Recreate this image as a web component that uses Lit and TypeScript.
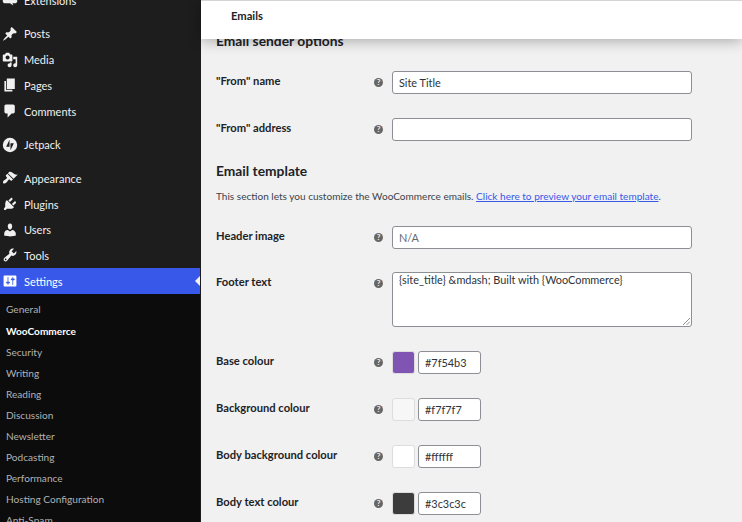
import { LitElement, html, css, svg } from "lit";
import { customElement } from "lit/decorators.js";

const icons: Record<string, string> = {
  ext: "M3 3h14c1 0 2 1 2 2v7c0 1-1 2-2 2h-4l1 3-4-3H3c-1 0-2-1-2-2V5c0-1 1-2 2-2z",
  posts: "M10.44 3.02l1.82-1.82 6.36 6.35-1.83 1.82c-1.05-.68-2.48-.57-3.41.36l-.75.75c-.92.93-1.04 2.35-.35 3.41l-1.83 1.82-2.41-2.41-2.8 2.79c-.42.42-3.38 2.71-3.8 2.29s1.86-3.39 2.28-3.81l2.79-2.79L4.1 9.36l1.83-1.82c1.05.69 2.48.57 3.4-.36l.75-.75c.93-.92 1.05-2.35.36-3.41z",
  media: "M13 11V4c0-.55-.45-1-1-1h-1.67L9 1H5L3.67 3H2c-.55 0-1 .45-1 1v7c0 .55.45 1 1 1h10c.55 0 1-.45 1-1zM7 4.5c1.38 0 2.5 1.12 2.5 2.5S8.38 9.5 7 9.5 4.5 8.38 4.5 7 5.62 4.5 7 4.5zM14 6h5v10.5c0 1.38-1.12 2.5-2.5 2.5S14 17.88 14 16.5s1.12-2.5 2.5-2.5c.17 0 .34.02.5.05V9h-3V6zm-4 8.05V13h2v3.5c0 1.38-1.12 2.5-2.5 2.5S7 17.88 7 16.5 8.12 14 9.5 14c.17 0 .34.02.5.05z",
  pages: "M6 15V2h10v13H6zm-1 1h8v2H3V5h2v11z",
  comments: "M5 2h9c1.1 0 2 .9 2 2v7c0 1.1-.9 2-2 2h-2l-5 5v-5H5c-1.1 0-2-.9-2-2V4c0-1.1.9-2 2-2z",
  jetpack: "M10 1a9 9 0 1 0 0 18 9 9 0 0 0 0-18zM9.4 3.5v8.6H5.2zM10.6 16.5V7.9h4.2z",
  appearance: "M14.48 11.06L7.41 3.99l1.5-1.5c.5-.56 2.3-.47 3.51.32 1.21.8 1.43 1.28 2.91 2.1 1.18.64 2.45 1.26 4.45.85zm-.71.71L6.7 4.7 4.93 6.47c-.39.39-.39 1.02 0 1.41l1.06 1.06c.39.39.39 1.03 0 1.42-.6.6-1.43 1.11-2.21 1.69-.35.26-.7.53-1.01.84C1.43 13.71.96 15.26 1.5 16.7c1.44.54 3 .07 4.3-1.27.31-.31.58-.66.84-1.01.58-.78 1.09-1.61 1.69-2.21.39-.39 1.03-.39 1.42 0l1.06 1.06c.39.39 1.02.39 1.41 0z",
  plugins: "M13.11 4.36L9.87 7.6 8 5.73l3.24-3.24c.35-.34 1.05-.2 1.56.32.52.51.66 1.21.31 1.55zm-8 1.77l.91-1.12 9.01 9.01-1.19.84c-.71.71-2.63 1.16-3.82 1.16H6.14L4.9 17.26c-.59.59-1.54.59-2.12 0-.59-.58-.59-1.53 0-2.12l1.24-1.24v-3.88c0-1.13.4-3.19 1.09-3.89zm7.26 3.97l3.24-3.24c.34-.35 1.04-.21 1.55.31.52.51.66 1.21.31 1.55l-3.24 3.25z",
  users: "M10 9.25c-2.27 0-2.73-3.44-2.73-3.44C7 4.02 7.82 2 9.97 2c2.16 0 2.98 2.02 2.71 3.81 0 0-.41 3.44-2.68 3.44zm0 2.57L12.72 10c2.39 0 4.52 2.33 4.52 4.53v2.49s-3.65 1.13-7.24 1.13c-3.65 0-7.24-1.13-7.24-1.13v-2.49c0-2.25 1.94-4.48 4.47-4.48z",
  tools: "M16.68 9.77c-1.34 1.34-3.3 1.67-4.95.99l-5.41 6.52c-.99.99-2.59.99-3.58 0s-.99-2.59 0-3.57l6.52-5.42c-.68-1.65-.35-3.61.99-4.95 1.28-1.28 3.12-1.62 4.72-1.06l-2.89 2.89 2.82 2.82 2.86-2.87c.53 1.58.18 3.39-1.08 4.65zM3.81 16.21c.4.39 1.04.39 1.43 0 .4-.4.4-1.04 0-1.43-.39-.4-1.03-.4-1.43 0-.39.39-.39 1.03 0 1.43z",
  settings: "M18 16V4c0-.55-.45-1-1-1H3c-.55 0-1 .45-1 1v12c0 .55.45 1 1 1h14c.55 0 1-.45 1-1zM8 11h1c.55 0 1 .45 1 1s-.45 1-1 1H8v1.5c0 .28-.22.5-.5.5s-.5-.22-.5-.5V13H6c-.55 0-1-.45-1-1s.45-1 1-1h1V5.5c0-.28.22-.5.5-.5s.5.22.5.5V11zm5-2h-1c-.55 0-1-.45-1-1s.45-1 1-1h1V5.5c0-.28.22-.5.5-.5s.5.22.5.5V7h1c.55 0 1 .45 1 1s-.45 1-1 1h-1v5.5c0 .28-.22.5-.5.5s-.5-.22-.5-.5V9z",
};

const icon = (n: string) =>
  html`<svg class="ico" viewBox="0 0 20 20" fill="currentColor" fill-rule="evenodd">${svg`<path d=${icons[n]}></path>`}</svg>`;

const groups: [string, string][][] = [
  [["ext", "Extensions"]],
  [["posts", "Posts"], ["media", "Media"], ["pages", "Pages"], ["comments", "Comments"]],
  [["jetpack", "Jetpack"]],
  [["appearance", "Appearance"], ["plugins", "Plugins"], ["users", "Users"], ["tools", "Tools"]],
];

const sub = ["General", "WooCommerce", "Security", "Writing", "Reading", "Discussion", "Newsletter", "Podcasting", "Performance", "Hosting Configuration", "Anti-Spam"];

const colours = [
  ["Base colour", "#7f54b3"],
  ["Background colour", "#f7f7f7"],
  ["Body background colour", "#ffffff"],
  ["Body text colour", "#3c3c3c"],
];

@customElement("app-root")
export class AppRoot extends LitElement {
  static styles = css`
    :host {
      display: flex;
      width: 742px;
      height: 522px;
      overflow: hidden;
      background: #f1f1f1;
      font-family: "Lato", sans-serif;
      color: #3c434a;
    }
    .side {
      width: 200px;
      flex: none;
      background: #1d1d1d;
      border-right: 1px solid #1d1d1d;
      overflow: hidden;
      height: 522px;
    }
    .menu { margin-top: -12.6px; }
    .group { margin-bottom: 8px; }
    .item {
      display: flex;
      align-items: center;
      height: 25.7px;
      padding-left: 2px;
      gap: 6px;
      color: #f0f0f0;
      font-size: 11px;
    }
    .ico { width: 16px; height: 16px; flex: none; }
    .item.active {
      background: #3858e9;
      color: #fff;
      position: relative;
      margin-right: -1px;
    }
    .item.active::after {
      content: "";
      position: absolute;
      right: 0;
      top: 50%;
      margin-top: -6px;
      border: 6px solid transparent;
      border-right-color: #f1f1f1;
      border-left-width: 0;
    }
    .sub {
      background: #0c0c0c;
      padding: 5.5px 0 0 6px;
      height: 240px;
    }
    .sub div {
      height: 21.1px;
      line-height: 21.1px;
      font-size: 10.1px;
      color: #b0b2b4;
      white-space: nowrap;
    }
    .sub div.cur { color: #fff; font-weight: 700; }
    .main { flex: 1; min-width: 0; position: relative; }
    .top {
      position: relative;
      z-index: 2;
      box-sizing: border-box;
      height: 39px;
      background: #fff;
      border-top: 1px solid #d4d4d4;
      box-shadow: 0 2px 14px rgba(0, 0, 0, 0.3);
      padding: 7px 0 0 30px;
      font-size: 11.2px;
      line-height: 15px;
      font-weight: 700;
      color: #1d2327;
    }
    .content {
      margin-top: -7px;
      padding-left: 15px;
      width: 476px;
    }
    h2 {
      margin: 0;
      font-size: 13.8px;
      line-height: 18px;
      font-weight: 700;
      color: #1d2327;
    }
    .row {
      display: flex;
      align-items: flex-start;
      margin-bottom: 24px;
    }
    .row.first { margin-top: 21px; }
    .label {
      width: 156px;
      flex: none;
      font-size: 11.2px;
      font-weight: 700;
      line-height: 18px;
      padding-top: 1px;
      color: #1d2327;
    }
    .help {
      width: 9px;
      height: 9px;
      border-radius: 50%;
      background: #666;
      color: #f1f1f1;
      font-size: 8px;
      font-weight: 700;
      line-height: 9px;
      text-align: center;
      margin: 7px 0 0 2px;
      flex: none;
    }
    .fields { margin-left: 9px; display: flex; gap: 3px; }
    .input {
      box-sizing: border-box;
      width: 300px;
      height: 23px;
      background: #fff;
      border: 1px solid #8c8f94;
      border-radius: 3px;
      font-size: 10.9px;
      line-height: 21px;
      padding-left: 6px;
      color: #2c3338;
    }
    .input.ph { color: #646970; }
    .area {
      height: 55px;
      line-height: 13px;
      position: relative;
    }
    .grip {
      position: absolute;
      right: 1px;
      bottom: 1px;
      width: 8px;
      height: 8px;
    }
    .swatch {
      box-sizing: border-box;
      width: 23px;
      height: 23px;
      border: 1px solid #ddd;
      border-radius: 3px;
    }
    .hex { width: 63px; }
    .desc {
      margin: 9px 0 22px;
      font-size: 10.05px;
      line-height: 15px;
      color: #3c434a;
      white-space: nowrap;
    }
    .desc a { color: #3858e9; text-decoration: underline; }
    .tpl { margin-top: -3px; }
  `;

  private field(label: string, body: unknown) {
    return html`<div class="row">
      <div class="label">${label}</div>
      <div class="help">?</div>
      <div class="fields">${body}</div>
    </div>`;
  }

  render() {
    return html`
      <nav class="side">
        <div class="menu">
          ${groups.map(
            (g) => html`<div class="group">
              ${g.map(([i, t]) => html`<div class="item">${icon(i)}<span>${t}</span></div>`)}
            </div>`
          )}
          <div class="item active" style="margin-top:-8px">${icon("settings")}<span>Settings</span></div>
          <div class="sub">
            ${sub.map((s) => html`<div class=${s === "WooCommerce" ? "cur" : ""}>${s}</div>`)}
          </div>
        </div>
      </nav>
      <main class="main">
        <header class="top">Emails</header>
        <div class="content">
          <h2>Email sender options</h2>
          <div class="row first">
            <div class="label">"From" name</div>
            <div class="help">?</div>
            <div class="fields"><div class="input">Site Title</div></div>
          </div>
          ${this.field('"From" address', html`<div class="input"></div>`)}
          <h2 class="tpl">Email template</h2>
          <p class="desc">This section lets you customize the WooCommerce emails. <a>Click here to preview your email template</a>.</p>
          <div class="row" style="margin-bottom:23px">
            <div class="label">Header image</div>
            <div class="help">?</div>
            <div class="fields"><div class="input ph">N/A</div></div>
          </div>
          ${this.field(
            "Footer text",
            html`<div class="input area">{site_title} &amp;mdash; Built with {WooCommerce}
              <svg class="grip" viewBox="0 0 8 8" fill="none" stroke="#777" stroke-width="0.8"><path d="M1 8L8 1M4.5 8L8 4.5"></path></svg>
            </div>`
          )}
          ${colours.map(([l, c]) =>
            this.field(
              l,
              html`<div class="swatch" style="background:${c}"></div><div class="input hex">${c}</div>`
            )
          )}
        </div>
      </main>
    `;
  }
}
